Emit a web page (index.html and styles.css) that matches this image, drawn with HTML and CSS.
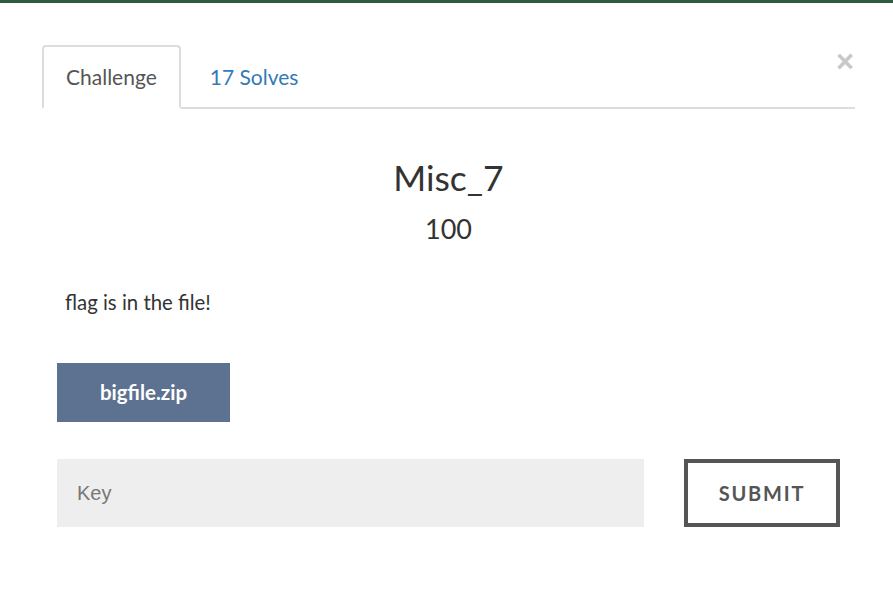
FILE: index.html
```html
<!DOCTYPE html>
<html>
<head>
<meta charset="utf-8">
<link rel="stylesheet" href="styles.css">
</head>
<body>
<div class="strip"></div>
<div class="modal">
  <button class="close" aria-label="Close">&times;</button>
  <ul class="tabs">
    <li class="tab active">Challenge</li>
    <li class="tab link">17 Solves</li>
  </ul>
  <div class="content">
    <h2 class="title">Misc_7</h2>
    <div class="value">100</div>
    <p class="desc">flag is in the file!</p>
    <div class="files">
      <a class="file-btn">bigfile.zip</a>
    </div>
    <div class="submit-row">
      <input class="key" type="text" placeholder="Key">
      <button class="submit">SUBMIT</button>
    </div>
  </div>
</div>
</body>
</html>
```
FILE: styles.css
```css
html, body {
  margin: 0;
  background: #fff;
  font-family: Lato, "Open Sans", sans-serif;
  color: #333;
}
.strip {
  height: 3px;
  background: #2f5c3e;
}
.modal {
  position: relative;
  padding: 42px 38px 0 42px;
}
.close {
  position: absolute;
  top: 44px;
  right: 39px;
  border: none;
  background: none;
  padding: 0;
  font-family: "Liberation Sans", Arial, sans-serif;
  font-size: 31px;
  line-height: 30px;
  color: #c8c8c8;
  font-weight: bold;
}
.tabs {
  list-style: none;
  margin: 0;
  padding: 0;
  display: flex;
  border-bottom: 2px solid #dddddd;
}
.tab {
  font-size: 21px;
  height: 60px;
  line-height: 59px;
  padding: 0 22px;
  margin-bottom: -2px;
  border: 2px solid transparent;
  border-radius: 4px 4px 0 0;
}
.tab.active {
  border-color: #dddddd;
  border-bottom-color: #fff;
  color: #555;
}
.tab.link {
  color: #337ab7;
  padding: 0 7px 0 27px;
}
.content {
  padding: 0 15px;
}
.title {
  margin: 47px 0 0;
  text-align: center;
  font-weight: 400;
  font-size: 35.5px;
  line-height: 44px;
  color: #333;
}
.value {
  text-align: center;
  font-size: 27px;
  line-height: 32px;
  margin-top: 13px;
}
.desc {
  margin: 43px 0 0 8px;
  font-size: 20.4px;
  line-height: 28px;
}
.files {
  margin-top: 47px;
}
.file-btn {
  display: inline-block;
  background: #5c7290;
  color: #fff;
  font-weight: bold;
  font-size: 20.5px;
  width: 173px;
  height: 59px;
  line-height: 59px;
  text-align: center;
}
.submit-row {
  display: flex;
  align-items: flex-start;
  margin-top: 37px;
  width: 783px;
  justify-content: space-between;
}
.key {
  width: 587px;
  height: 68px;
  box-sizing: border-box;
  border: none;
  background: #eeeeee;
  padding: 0 20px;
  font-family: "Liberation Sans", Arial, sans-serif;
  font-size: 20px;
  color: #555;
  outline: none;
}
.key::placeholder {
  color: #777;
}
.submit {
  width: 156px;
  height: 68px;
  box-sizing: border-box;
  border: 4px solid #555;
  background: #fff;
  color: #555;
  font-family: Lato, sans-serif;
  font-weight: bold;
  font-size: 20px;
  letter-spacing: 1.8px;
  padding: 0;
}
```
